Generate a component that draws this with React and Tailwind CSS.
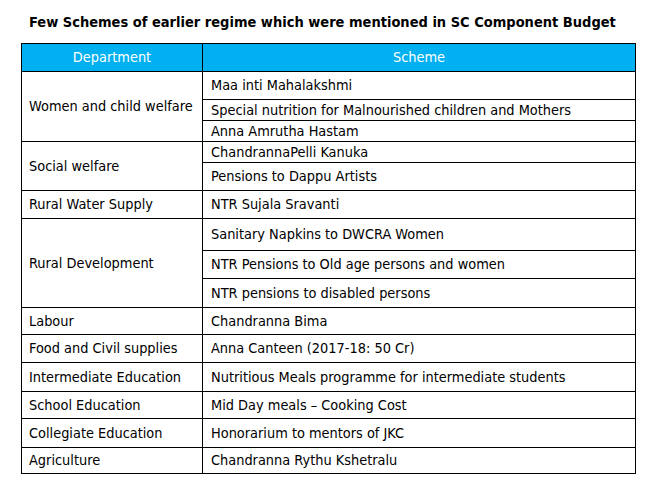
import React from "react";

const FONT = { fontFamily: '"DejaVu Sans Condensed", "DejaVu Sans", sans-serif' };

const GROUPS = [
  {
    dept: "Women and child welfare",
    schemes: [
      ["Maa inti Mahalakshmi", "h-[28px]"],
      ["Special nutrition for Malnourished children and Mothers", "h-[21px]"],
      ["Anna Amrutha Hastam", "h-[21px]"],
    ],
  },
  {
    dept: "Social welfare",
    schemes: [
      ["ChandrannaPelli Kanuka", "h-[21px]"],
      ["Pensions to Dappu Artists", "h-[28px]"],
    ],
  },
  { dept: "Rural Water Supply", schemes: [["NTR Sujala Sravanti", "h-[28px]"]] },
  {
    dept: "Rural Development",
    schemes: [
      ["Sanitary Napkins to DWCRA Women", "h-[32px]"],
      ["NTR Pensions to Old age persons and women", "h-[28px]"],
      ["NTR pensions to disabled persons", "h-[29px]"],
    ],
  },
  { dept: "Labour", schemes: [["Chandranna Bima", "h-[27px]"]] },
  { dept: "Food and Civil supplies", schemes: [["Anna Canteen (2017-18: 50 Cr)", "h-[28px]"]] },
  { dept: "Intermediate Education", schemes: [["Nutritious Meals programme for intermediate students", "h-[29px]"]] },
  { dept: "School Education", schemes: [["Mid Day meals \u2013 Cooking Cost", "h-[27px]"]] },
  { dept: "Collegiate Education", schemes: [["Honorarium to mentors of JKC", "h-[29px]"]] },
  { dept: "Agriculture", schemes: [["Chandranna Rythu Kshetralu", "h-[26px]"]] },
];

export default function App() {
  return (
    <div className="w-[659px] h-[497px] bg-white text-black" style={FONT}>
      <div className="pt-[13px] pl-[29px] text-[14.5px] font-bold leading-[18px]">
        Few Schemes of earlier regime which were mentioned in SC Component Budget
      </div>

      <table className="ml-[21px] mt-[12px] w-[615px] border-collapse border border-black text-[14.4px] leading-none">
        <thead>
          <tr className="h-[28px] bg-[#00b0f0] text-white">
            <th className="w-[181px] border border-black font-normal text-center">Department</th>
            <th className="border border-black font-normal text-center">Scheme</th>
          </tr>
        </thead>
        <tbody>
          {GROUPS.map((g) =>
            g.schemes.map(([scheme, h], i) => (
              <tr key={scheme} className={h}>
                {i === 0 && (
                  <td rowSpan={g.schemes.length} className="border border-black pl-[7px] align-middle">
                    {g.dept}
                  </td>
                )}
                <td className="border border-black pl-[8px] align-middle">{scheme}</td>
              </tr>
            ))
          )}
        </tbody>
      </table>
    </div>
  );
}
